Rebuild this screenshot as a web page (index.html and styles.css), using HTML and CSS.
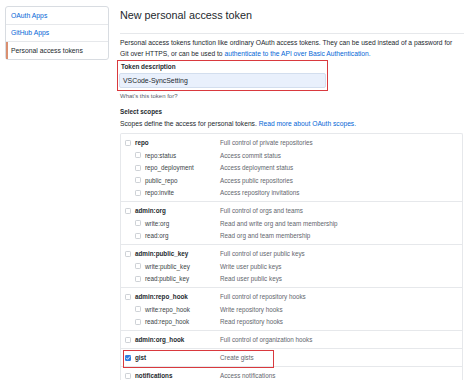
FILE: index.html
```html
<!DOCTYPE html>
<html lang="en">
<head>
<meta charset="utf-8">
<title>New personal access token</title>
<link rel="stylesheet" href="styles.css">
</head>
<body>
<div class="page">
  <nav class="side">
    <a class="side-item">OAuth Apps</a>
    <a class="side-item">GitHub Apps</a>
    <a class="side-item selected">Personal access tokens</a>
  </nav>
  <main class="main">
    <h2 class="title">New personal access token</h2>
    <p class="intro"><span>Personal access tokens function like ordinary OAuth access tokens. They can be used instead of a password for</span> <span>Git over HTTPS, or can be used to</span> <a class="link">authenticate to the API over Basic Authentication.</a></p>
    <div class="desc-box">
      <div class="label">Token description</div>
      <div class="input">VSCode-SyncSetting</div>
    </div>
    <p class="hint">What's this token for?</p>
    <h3 class="sub">Select scopes</h3>
    <p class="scopes-intro"><span>Scopes define the access for personal tokens.</span> <a class="link">Read more about OAuth scopes.</a></p>
    <div class="scopes">
      <div class="group">
        <div class="row parent"><span class="key"><span class="cb"></span><span class="name">repo</span></span><span class="d">Full control of private repositories</span></div>
        <div class="row child"><span class="key"><span class="cb"></span><span class="name">repo:status</span></span><span class="d">Access commit status</span></div>
        <div class="row child"><span class="key"><span class="cb"></span><span class="name">repo_deployment</span></span><span class="d">Access deployment status</span></div>
        <div class="row child"><span class="key"><span class="cb"></span><span class="name">public_repo</span></span><span class="d">Access public repositories</span></div>
        <div class="row child"><span class="key"><span class="cb"></span><span class="name">repo:invite</span></span><span class="d">Access repository invitations</span></div>
      </div>
      <div class="group">
        <div class="row parent"><span class="key"><span class="cb"></span><span class="name">admin:org</span></span><span class="d">Full control of orgs and teams</span></div>
        <div class="row child"><span class="key"><span class="cb"></span><span class="name">write:org</span></span><span class="d">Read and write org and team membership</span></div>
        <div class="row child"><span class="key"><span class="cb"></span><span class="name">read:org</span></span><span class="d">Read org and team membership</span></div>
      </div>
      <div class="group">
        <div class="row parent"><span class="key"><span class="cb"></span><span class="name">admin:public_key</span></span><span class="d">Full control of user public keys</span></div>
        <div class="row child"><span class="key"><span class="cb"></span><span class="name">write:public_key</span></span><span class="d">Write user public keys</span></div>
        <div class="row child"><span class="key"><span class="cb"></span><span class="name">read:public_key</span></span><span class="d">Read user public keys</span></div>
      </div>
      <div class="group">
        <div class="row parent"><span class="key"><span class="cb"></span><span class="name">admin:repo_hook</span></span><span class="d">Full control of repository hooks</span></div>
        <div class="row child"><span class="key"><span class="cb"></span><span class="name">write:repo_hook</span></span><span class="d">Write repository hooks</span></div>
        <div class="row child"><span class="key"><span class="cb"></span><span class="name">read:repo_hook</span></span><span class="d">Read repository hooks</span></div>
      </div>
      <div class="group">
        <div class="row parent"><span class="key"><span class="cb"></span><span class="name">admin:org_hook</span></span><span class="d">Full control of organization hooks</span></div>
      </div>
      <div class="group marked">
        <div class="row parent"><span class="key"><svg class="cb-on" viewBox="0 0 6 6" width="6" height="6"><rect x="0" y="0" width="6" height="6" rx="1.2" fill="#2f7ee0"/><polyline points="1.4,3.1 2.6,4.3 4.7,1.8" fill="none" stroke="#fff" stroke-width="0.9" stroke-linecap="round" stroke-linejoin="round"/></svg><span class="name">gist</span></span><span class="d">Create gists</span></div>
        <span class="highlight"></span>
      </div>
      <div class="group">
        <div class="row parent"><span class="key"><span class="cb"></span><span class="name">notifications</span></span><span class="d">Access notifications</span></div>
      </div>
    </div>
  </main>
</div>
</body>
</html>
```

FILE: styles.css
```css
* { box-sizing: border-box; }

html, body {
  margin: 0;
  padding: 0;
  background: #ffffff;
}

body {
  font-family: "Liberation Sans", Arial, sans-serif;
  color: #24292e;
  overflow: hidden;
}

.page {
  display: flex;
  align-items: flex-start;
  gap: 11px;
  padding: 6px 10px 0 5px;
}

/* Sidebar */
.side {
  width: 104px;
  flex: none;
  display: flex;
  flex-direction: column;
  border: 1px solid #d8dce1;
  border-radius: 3px;
  background: #fff;
}

.side-item {
  display: block;
  font-size: 6.8px;
  line-height: 8px;
  padding: 4.5px 4px 4px 5px;
  color: #0366d6;
  white-space: nowrap;
}

.side-item + .side-item {
  border-top: 1px solid #e6e8eb;
}

.side-item.selected {
  color: #24292e;
  box-shadow: inset 2px 0 0 #d98f70;
}

/* Main */
.main {
  flex: 1;
  min-width: 0;
  display: flex;
  flex-direction: column;
}

.title {
  margin: 0;
  font-size: 10.8px;
  font-weight: 400;
  line-height: 18px;
  padding-bottom: 9px;
  border-bottom: 1px solid #e6e8eb;
  color: #24292e;
}

.intro {
  margin: 4.25px 0 0;
  max-width: 338px;
  font-size: 6.7px;
  line-height: 10.5px;
  color: #24292e;
}

.link {
  color: #0366d6;
}

.desc-box {
  margin: 1px 0 0 -3px;
  width: 211px;
  border: 1.5px solid #d9393e;
  padding: 0.5px 1.5px 1.5px 0.5px;
}

.label {
  font-size: 6.4px;
  font-weight: 700;
  line-height: 7.5px;
  padding-left: 2.5px;
  margin-top: 0.75px;
}

.input {
  margin-top: 2.5px;
  height: 15.5px;
  padding-left: 3.5px;
  display: flex;
  align-items: center;
  background: #e9f0fc;
  border: 1px solid #d3deee;
  border-radius: 2px;
  font-size: 6.9px;
  color: #24292e;
}

.hint {
  margin: 1.75px 0 0;
  font-size: 6px;
  line-height: 8px;
  color: #586069;
}

.sub {
  margin: 6.5px 0 0;
  font-size: 6.3px;
  font-weight: 700;
  line-height: 9px;
}

.scopes-intro {
  margin: 3px 0 0;
  font-size: 6.7px;
  line-height: 9px;
}

/* Scope table */
.scopes {
  margin-top: 5.5px;
  margin-right: 1px;
  border: 1px solid #e6e8eb;
  border-bottom: none;
  border-radius: 2px 2px 0 0;
}

.group {
  padding: 2.25px 0;
}

.group + .group {
  border-top: 1px solid #e6e8eb;
}

.group.marked {
  position: relative;
}

.highlight {
  position: absolute;
  left: 2px;
  top: 0.5px;
  width: 151px;
  height: 18px;
  border: 1.5px solid #d9393e;
}

.row {
  display: flex;
  align-items: center;
  height: 12.5px;
  padding-left: 4px;
  font-size: 6.3px;
}

.key {
  width: 95px;
  flex: none;
  display: flex;
  align-items: center;
}

.row.child .key {
  padding-left: 10px;
}

.cb {
  width: 6px;
  height: 6px;
  flex: none;
  border: 0.8px solid #cdd1d6;
  border-radius: 1.2px;
  background: #fff;
  margin-right: 4px;
}

.cb-on {
  flex: none;
  margin-right: 4px;
  display: block;
}

.name {
  color: #3a3f45;
  white-space: nowrap;
}

.row.parent .name {
  font-weight: 700;
  color: #24292e;
}

.d {
  color: #5f666e;
  white-space: nowrap;
}
```
